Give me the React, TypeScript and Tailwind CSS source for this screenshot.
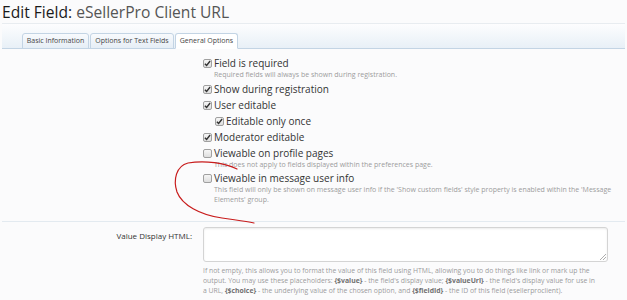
import React from 'react';

const font = { fontFamily: '"Open Sans", "DejaVu Sans", sans-serif' };

const Box: React.FC<{ checked?: boolean }> = ({ checked }) => (
  <span className="mt-[3px] flex h-[9px] w-[9px] shrink-0 items-center justify-center rounded-[2px] border border-[#a0a0a0] bg-gradient-to-b from-[#f6f6f6] to-[#dedede]">
    {checked && (
      <svg width="7" height="7" viewBox="0 0 8 8">
        <path d="M1 4.2 L3 6.3 L7 1.2" fill="none" stroke="#333" strokeWidth="1.6" />
      </svg>
    )}
  </span>
);

const Check: React.FC<{ label: string; checked?: boolean; hint?: React.ReactNode; indent?: boolean }> = ({ label, checked, hint, indent }) => (
  <div className={indent ? 'pl-[12px]' : ''}>
    <label className="flex items-start gap-[2px] text-[10px] leading-[14px] text-[#333]">
      <Box checked={checked} />
      <span>{label}</span>
    </label>
    {hint && <p className="whitespace-nowrap pl-[11px] text-[7px] leading-[9.5px] text-[#9c9c9c]">{hint}</p>}
  </div>
);

const Tab: React.FC<{ label: string; w: string; active?: boolean }> = ({ label, w, active }) => (
  <div
    className={`-mb-px flex h-[16px] items-center justify-center rounded-t-[3px] border border-[#c3d4e4] text-[7px] text-[#444] ${w} ${
      active ? 'border-b-white bg-white' : 'bg-gradient-to-b from-[#f8fafd] to-[#e6eef6]'
    }`}
  >
    {label}
  </div>
);

const Ph: React.FC<{ children: string }> = ({ children }) => <b className="font-bold text-[#707070]">{children}</b>;

export default function App() {
  return (
    <div className="relative h-[300px] w-[627px] overflow-hidden bg-[#fbfbfc]" style={font}>
      <h1 className="px-[2px] pt-[3px] text-[15.6px] leading-[19px] text-[#555]">
        <span className="text-[#1a1a1a]">Edit Field:</span> eSellerPro Client URL
      </h1>
      <div className="mx-[2px] mt-[1px] h-px bg-[#e8ecf0]" />

      <div className="mx-[2px] flex h-[25px] items-end border-b border-[#c3d4e4] bg-gradient-to-b from-[#fdfdfe] to-[#e8f0f7] pl-[20px]">
        <div className="flex gap-px">
          <Tab label="Basic Information" w="w-[67px]" />
          <Tab label="Options for Text Fields" w="w-[84px]" />
          <Tab label="General Options" w="w-[63px]" active />
        </div>
      </div>

      <div className="grid grid-cols-[203px_1fr] pt-[7px]">
        <div />
        <div className="flex flex-col gap-[2px] pr-[14px]">
          <Check label="Field is required" checked hint="Required fields will always be shown during registration." />
          <Check label="Show during registration" checked />
          <Check label="User editable" checked />
          <Check label="Editable only once" checked indent />
          <Check label="Moderator editable" checked />
          <Check label="Viewable on profile pages" hint="This does not apply to fields displayed within the preferences page." />
          <Check
            label="Viewable in message user info"
            hint={
              <>
                This field will only be shown on message user info if the 'Show custom fields' style property is enabled within the 'Message
                <br />
                Elements' group.
              </>
            }
          />
        </div>
      </div>

      <div className="mx-[2px] mt-[17px] h-px bg-[#e3eaf0]" />

      <div className="grid grid-cols-[203px_1fr] pt-[5px]">
        <div className="pr-[11px] pt-[3px] text-right text-[8px] text-[#333]">Value Display HTML:</div>
        <div className="pr-[19px]">
          <div className="relative h-[35px] rounded-[3px] border border-[#d4d4d4] bg-white shadow-[inset_0_1px_2px_rgba(0,0,0,0.08)]">
            <svg className="absolute bottom-[1px] right-[1px]" width="6" height="6" viewBox="0 0 6 6">
              <path d="M0 6 L6 0 M3 6 L6 3" stroke="#999" strokeWidth="0.8" />
            </svg>
          </div>
          <p className="mt-[4px] whitespace-nowrap text-[6.85px] leading-[10px] text-[#9c9c9c]">
            If not empty, this allows you to format the value of this field using HTML, allowing you to do things like link or mark up the
            <br />
            output. You may use these placeholders: <Ph>{'{$value}'}</Ph> - the field's display value; <Ph>{'{$valueUrl}'}</Ph> - the field's display value for use in
            <br />
            a URL, <Ph>{'{$choice}'}</Ph> - the underlying value of the chosen option, and <Ph>{'{$fieldId}'}</Ph> - the ID of this field (esellerproclient).
          </p>
        </div>
      </div>

      <svg className="pointer-events-none absolute left-0 top-0" width="627" height="300" viewBox="0 0 627 300">
        <path
          d="M237 169 C 225 163, 205 160, 188 163 C 176 166, 173 180, 177 192 C 182 205, 200 215, 222 218 C 235 220, 245 221, 254 223"
          fill="none"
          stroke="#c81c1c"
          strokeWidth="1.2"
          strokeLinecap="round"
        />
      </svg>
    </div>
  );
}
